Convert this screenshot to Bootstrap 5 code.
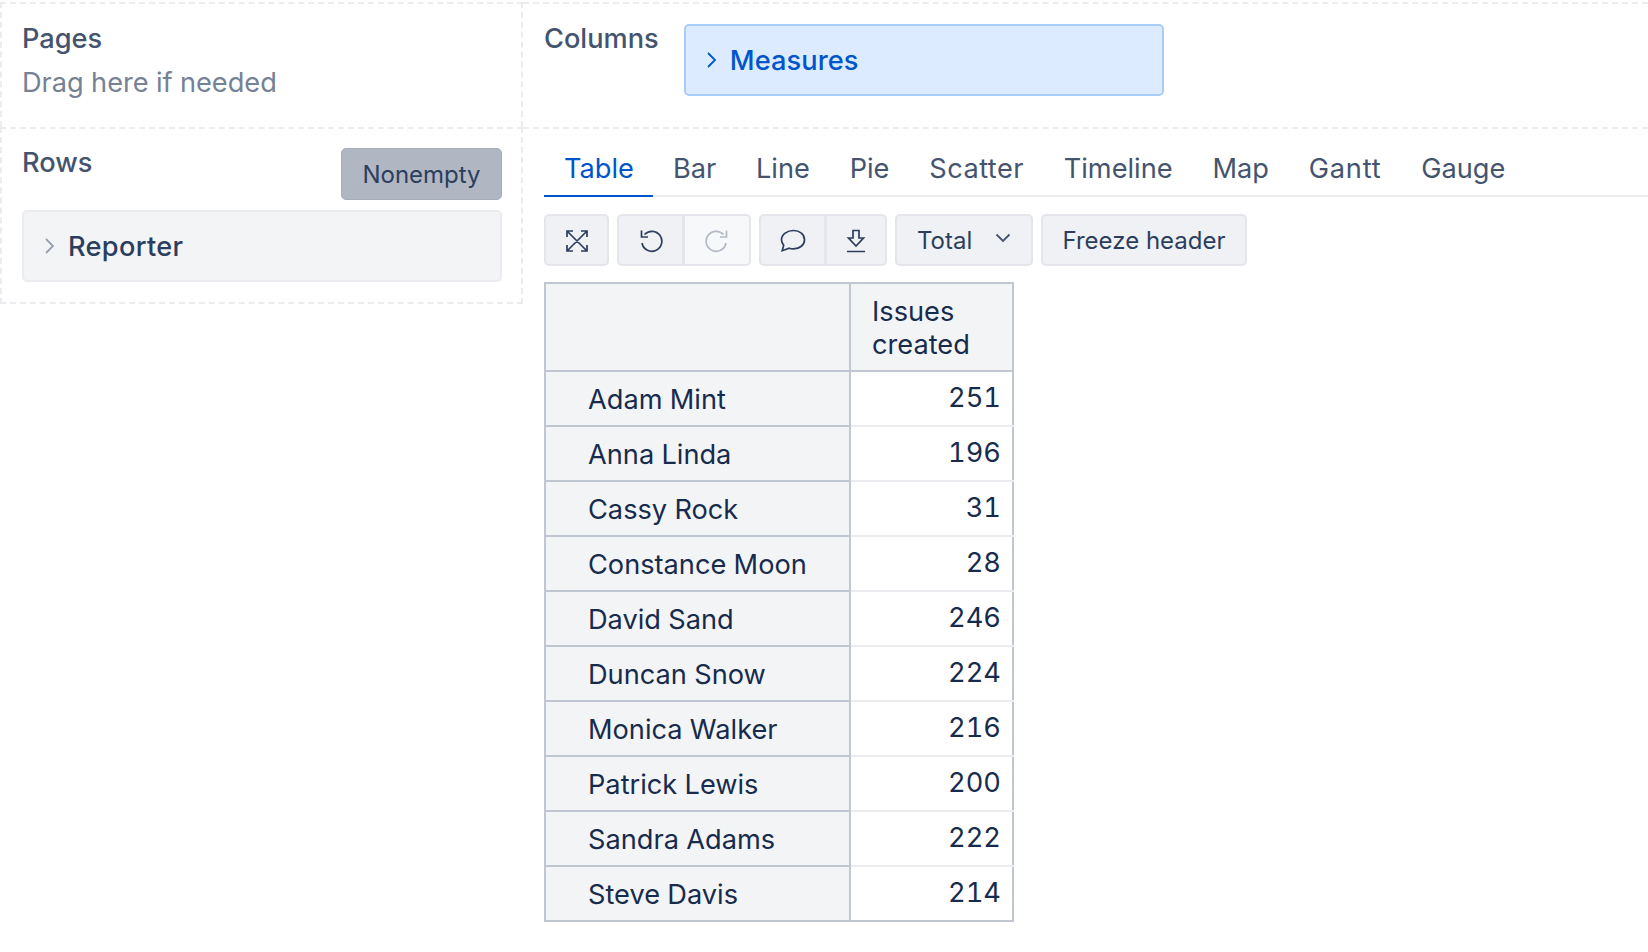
<!DOCTYPE html>
<html lang="en">
<head>
    <meta charset="UTF-8">
    <title>Report</title>
    <link rel="stylesheet" href="https://cdn.jsdelivr.net/npm/bootstrap@5.3.0/dist/css/bootstrap.min.css">
    <style>
        body { font-family: Inter, "Liberation Sans", sans-serif; font-size: 27.2px; color: #172b4d; background: #fff; overflow: hidden; font-variant-numeric: tabular-nums; font-variant-ligatures: none; font-feature-settings: "calt" 0; }
        .top-line { padding-top: 2px; }
        .left-pane { width: 523px; flex: none; }
        .right-pane { flex: 1 1 auto; min-width: 0; }
        .drop-cell { border: 2px dashed #ebecf0; border-right: 0; border-bottom: 0; }
        .pages-cell { height: 125px; padding: 18px 20px 0 20px; border-right: 2px dashed #ebecf0; }
        .rows-cell { height: 177px; padding: 17px 19px 0 20px; border-right: 2px dashed #ebecf0; border-bottom: 2px dashed #ebecf0; }
        .cols-cell { height: 125px; padding: 18px 0 0 21px; border-left: 0; }
        .area-label { font-size: 27.2px; line-height: 34px; color: #44546f; font-weight: 500; }
        .hint-text { font-size: 27.2px; line-height: 34px; color: #758195; margin-top: 10px; }
        .dim-box { height: 72px; width: 480px; border-radius: 5px; border: 2px solid #ebecf0; background: #f3f4f6; color: #2c3e5d; font-weight: 500; font-size: 27.2px; letter-spacing: .3px; padding: 2px 0 0 19px; gap: 13px; }
        .dim-box.dim-active { width: 480px; margin-left: 25px; margin-top: 2px; background: #dcebff; border-color: #a9cdfb; color: #0055cc; letter-spacing: .1px; }
        .dim-box svg { width: 12px; height: 20px; flex: none; margin-top: -2px; }
        .nonempty-btn { width: 161px; height: 52px; padding: 2px 0 0; margin-top: 2px; background: #b0b6c2; border: 1px solid #a6adba; border-radius: 5px; color: #2c3e5d; font-size: 24px; }
        .report-tabs { padding: 0; margin: 0 0 0 21px; border-bottom: 2px solid #ebecf0; height: 68px; list-style: none; padding-top: 9px; }
        .report-tabs .nav-link { padding: 14px 19.8px 0 20px; height: 59px; font-size: 27.2px; line-height: 34px; color: #44546f; border: 0; border-bottom: 2px solid transparent; margin-bottom: -2px; background: none; }
        .report-tabs .nav-link.active { color: #0055cc; border-bottom-color: #0055cc; padding-right: 19px; }
        .report-tabs .nav-link.tab-wide { letter-spacing: .45px; }
        .report-tabs .nav-link.tab-wider { letter-spacing: .8px; }
        .tool-row { margin: 17px 0 0 21px; gap: 8px; }
        .tool-btn { height: 52px; background: #f0f1f4; border: 2px solid #e4e6eb; border-radius: 5px; color: #2c3e5d; font-size: 24px; padding: 2px 0 0; }
        .tool-btn:disabled { background: #f7f8fa; opacity: 1; border-color: #e4e6eb; color: #b3bac6; }
        .btn-group > .tool-btn { flex: none; }
        .icon-w65 { width: 65px; }
        .icon-w66 { width: 67px; }
        .icon-w67 { width: 68px; }
        .icon-w63 { width: 62px; }
        .total-btn { width: 138px; padding-left: 20px; padding-right: 20px; }
        .freeze-btn { width: 206px; }
        .tool-btn svg { display: block; margin: auto; }
        .report-table { margin: 16px 0 0 21px; width: 468px; border-collapse: collapse; table-layout: fixed; font-size: 27.2px; color: #172b4d; }
        .report-table th, .report-table td { border: 2px solid #c1c7d0; font-weight: 400; }
        .report-table th { background: #f3f4f6; }
        .report-table .head-label { padding: 11px 20px 9px 21px; line-height: 33px; vertical-align: top; }
        .report-table .row-label { height: 55px; padding: 4px 0 1px 42px; line-height: 34px; vertical-align: middle; white-space: nowrap; }
        .report-table td { border-left: 2px solid #c1c7d0; border-right: 2px solid #c1c7d0; border-top: 2px solid #ebecf0; border-bottom: 2px solid #ebecf0; text-align: right; padding: 0 11px 1px 0; vertical-align: middle; }
        .report-table tr:last-child td { border-bottom-color: #c1c7d0; }
    </style>
</head>
<body>
    <div class="top-line d-flex">
        <div class="left-pane">
            <div class="drop-cell pages-cell">
                <div class="area-label">Pages</div>
                <div class="hint-text">Drag here if needed</div>
            </div>
            <div class="drop-cell rows-cell">
                <div class="d-flex justify-content-between align-items-start" style="height:64px">
                    <div class="area-label">Rows</div>
                    <button class="btn nonempty-btn" type="button">Nonempty</button>
                </div>
                <div class="dim-box d-flex align-items-center">
                    <svg viewBox="0 0 12 20" fill="none" stroke="#97a0af" stroke-width="1.8"><path d="M3 3l7 7-7 7"/></svg>
                    <span>Reporter</span>
                </div>
            </div>
        </div>
        <div class="right-pane">
            <div class="drop-cell cols-cell d-flex align-items-start">
                <div class="area-label">Columns</div>
                <div class="dim-box dim-active d-flex align-items-center">
                    <svg viewBox="0 0 12 20" fill="none" stroke="#0055cc" stroke-width="1.8"><path d="M3 3l7 7-7 7"/></svg>
                    <span>Measures</span>
                </div>
            </div>
            <div class="drop-cell" style="border-left:0">
                <ul class="nav report-tabs">
                    <li class="nav-item"><a class="nav-link active" href="#">Table</a></li>
                    <li class="nav-item"><a class="nav-link" href="#">Bar</a></li>
                    <li class="nav-item"><a class="nav-link" href="#">Line</a></li>
                    <li class="nav-item"><a class="nav-link" href="#">Pie</a></li>
                    <li class="nav-item"><a class="nav-link tab-wide" href="#">Scatter</a></li>
                    <li class="nav-item"><a class="nav-link" href="#">Timeline</a></li>
                    <li class="nav-item"><a class="nav-link" href="#">Map</a></li>
                    <li class="nav-item"><a class="nav-link tab-wider" href="#">Gantt</a></li>
                    <li class="nav-item"><a class="nav-link" href="#">Gauge</a></li>
                </ul>
                <div class="tool-row d-flex">
                    <button class="btn tool-btn icon-w65" type="button" aria-label="Fullscreen">
                        <svg width="24" height="24" viewBox="0 0 24 24" fill="none" stroke="#2c3e5d" stroke-width="1.7"><path d="M2 8V2h6M16 2h6v6M22 16v6h-6M8 22H2v-6M2 2l20 20M22 2L2 22"/></svg>
                    </button>
                    <div class="btn-group">
                        <button class="btn tool-btn icon-w66" type="button" aria-label="Undo">
                            <svg width="24" height="24" viewBox="0 0 24 24" fill="none" stroke="#2c3e5d" stroke-width="1.7"><path d="M5.500 5.500A10 10 0 1 1 3 14"/><path d="M2.500 1.500v6.500h6.500"/></svg>
                        </button>
                        <button class="btn tool-btn icon-w67" type="button" disabled aria-label="Redo">
                            <svg width="24" height="24" viewBox="0 0 24 24" fill="none" stroke="#b3bac6" stroke-width="1.7"><path d="M18.500 5.500A10 10 0 1 0 21 14"/><path d="M21.500 1.500v6.500h-6.500"/></svg>
                        </button>
                    </div>
                    <div class="btn-group">
                        <button class="btn tool-btn icon-w66" type="button" aria-label="Comment">
                            <svg width="26" height="24" viewBox="0 0 26 24" fill="none" stroke="#2c3e5d" stroke-width="1.7"><path d="M13.500 1.500c6.300 0 11 4 11 9.200s-4.700 9.200-11 9.200c-1.500 0-3-.2-4.300-.7l-7 2.500 1.500-5.500C2.300 14.500 1.500 12.700 1.500 10.700 1.500 5.500 7.200 1.500 13.500 1.500z"/></svg>
                        </button>
                        <button class="btn tool-btn icon-w63" type="button" aria-label="Download">
                            <svg width="20" height="24" viewBox="0 0 20 24" fill="none" stroke="#2c3e5d" stroke-width="1.7"><path d="M7 1.500h6V9h4.500L10 17 2.500 9H7zM1 22.500h18"/></svg>
                        </button>
                    </div>
                    <button class="btn tool-btn total-btn d-flex align-items-center justify-content-between" type="button">
                        <span>Total</span>
                        <svg width="16" height="10" viewBox="0 0 16 10" fill="none" stroke="#44546f" stroke-width="1.8" style="margin:0 0 7px"><path d="M1.500 1.500L8 8l6.500-6.500"/></svg>
                    </button>
                    <button class="btn tool-btn freeze-btn" type="button">Freeze header</button>
                </div>
                <table class="report-table" id="report-table">
                    <colgroup><col style="width:305px"><col style="width:163px"></colgroup>
                    <thead><tr><th></th><th class="head-label">Issues<br>created</th></tr></thead>
                    <tbody id="report-body"></tbody>
                </table>
            </div>
        </div>
    </div>

    <script>
        const reporters = [
            ["Adam Mint", 251], ["Anna Linda", 196], ["Cassy Rock", 31], ["Constance Moon", 28],
            ["David Sand", 246], ["Duncan Snow", 224], ["Monica Walker", 216], ["Patrick Lewis", 200],
            ["Sandra Adams", 222], ["Steve Davis", 214]
        ];
        const body = document.getElementById("report-body");
        reporters.forEach(([name, count]) => {
            const row = document.createElement("tr");
            const label = document.createElement("th");
            label.className = "row-label";
            label.textContent = name;
            const value = document.createElement("td");
            value.textContent = count;
            row.append(label, value);
            body.appendChild(row);
        });
    </script>
    <script src="https://cdn.jsdelivr.net/npm/bootstrap@5.3.0/dist/js/bootstrap.bundle.min.js"></script>
</body>
</html>
